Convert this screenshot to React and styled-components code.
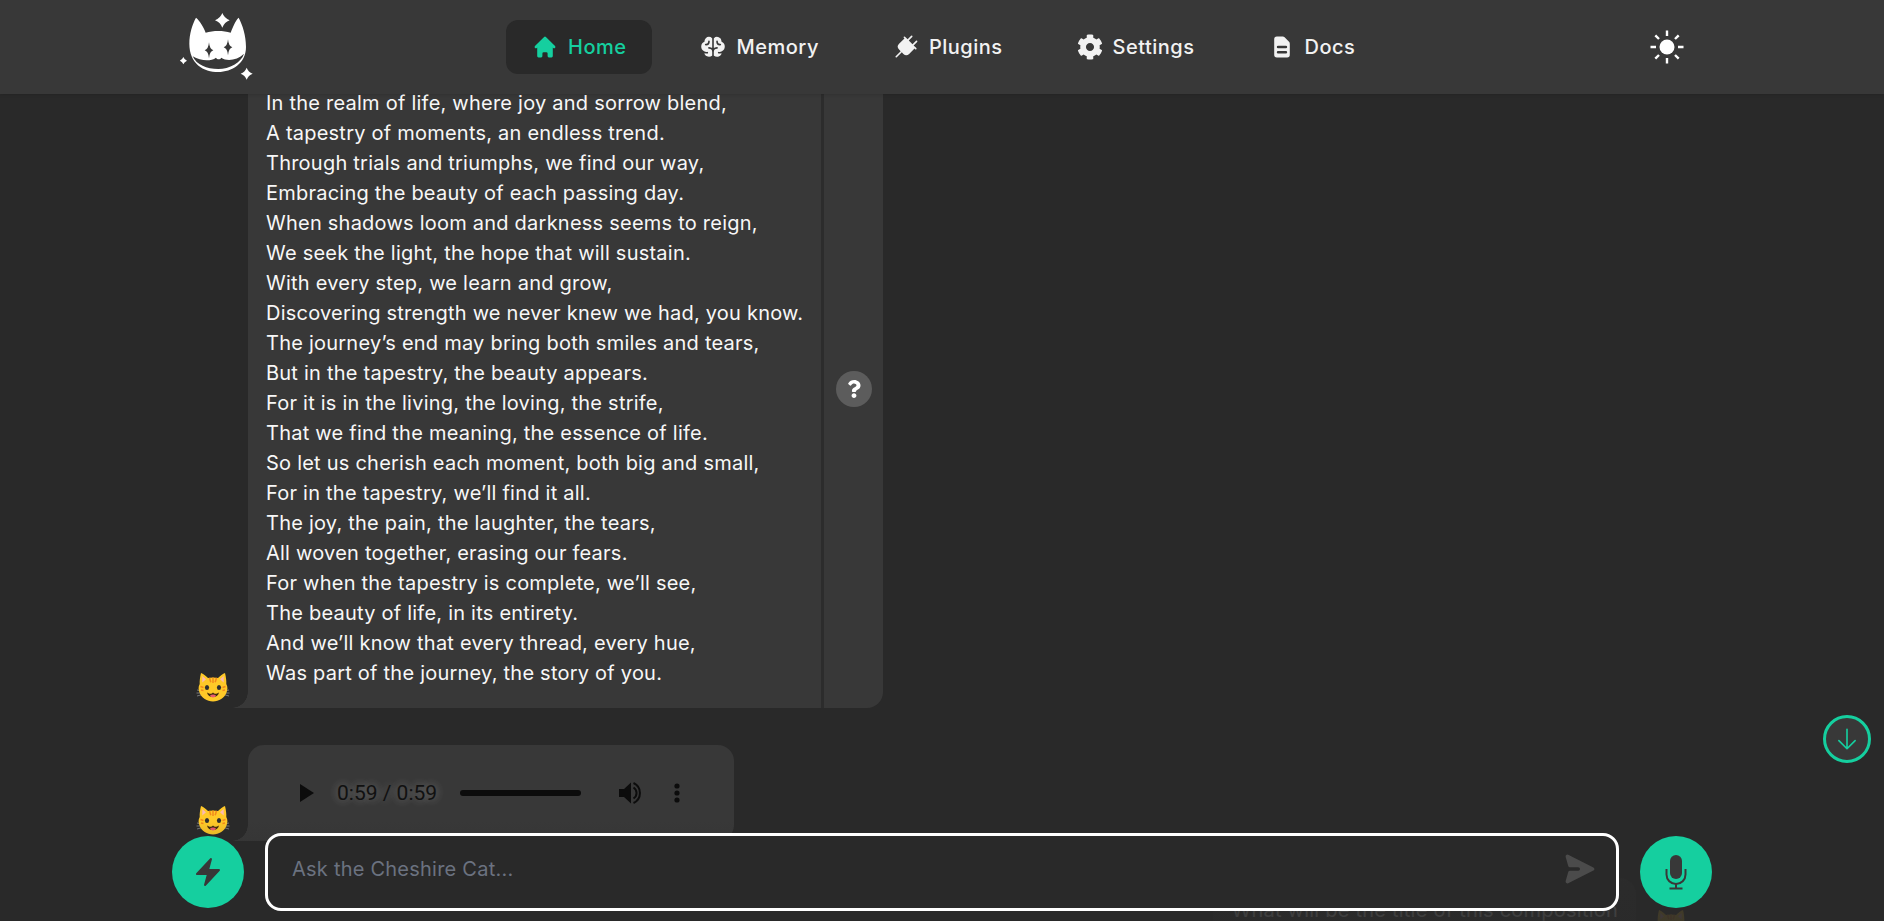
import React from "react";
import styled, { createGlobalStyle } from "styled-components";
import { HiHome, HiDocumentText, HiPaperAirplane } from "react-icons/hi";
import { HiBolt, HiOutlineArrowDown } from "react-icons/hi2";
import { PiBrainFill, PiPlugFill } from "react-icons/pi";
import { FaQuestion, FaCog } from "react-icons/fa";

const GREEN = "#15cf9f";
const BASE = "#292929";
const PANEL = "#383838";
const FONT = `Inter, "Noto Sans", "Liberation Sans", sans-serif`;

const Global = createGlobalStyle`
  html, body { margin: 0; padding: 0; height: 100%; background: ${BASE}; }
  body { font-family: ${FONT}; color: #fff; overflow: hidden; }
  * { box-sizing: border-box; }
`;

const Page = styled.div`
  position: relative;
  display: flex;
  flex-direction: column;
  height: 921px;
  overflow: hidden;
  background: ${BASE};
`;

const NavBar = styled.header`
  position: relative;
  z-index: 2;
  flex: 0 0 94px;
  display: flex;
  align-items: center;
  padding: 0 190px 0 180px;
  background: ${PANEL};
  box-shadow: 0 1px 3px rgba(0, 0, 0, 0.12);
`;

const Logo = styled.svg`
  width: 80px;
  height: 80px;
  display: block;
  flex: none;
`;

const Menu = styled.nav`
  display: flex;
  align-items: center;
  gap: 22px;
  margin-left: 246px;
`;

const MenuItem = styled.a`
  display: flex;
  align-items: center;
  gap: 10px;
  height: 54px;
  padding: 0 26px 1px;
  border-radius: 12px;
  font-size: 20px;
  font-weight: 500;
  letter-spacing: 0.5px;
  color: ${(p) => (p.$active ? GREEN : "#f2f2f2")};
  background: ${(p) => (p.$active ? BASE : "transparent")};
  svg {
    width: 26px;
    height: 26px;
    flex: none;
  }
`;

const ThemeButton = styled.button`
  display: flex;
  align-items: center;
  justify-content: center;
  width: 54px;
  height: 54px;
  margin-left: auto;
  padding: 0;
  border: 0;
  background: transparent;
  color: #fff;
  svg {
    width: 36px;
    height: 36px;
  }
`;

const Chat = styled.main`
  flex: 1;
  min-height: 0;
  margin-top: -26px;
  display: flex;
  flex-direction: column;
  gap: 37px;
  overflow: hidden;
`;

const Row = styled.div`
  display: flex;
  flex-direction: ${(p) => (p.$user ? "row-reverse" : "row")};
  align-items: flex-end;
  gap: 14px;
  padding: 0 192px;
  flex: none;
`;

const Avatar = styled.svg`
  display: block;
  width: 42px;
  height: 30px;
  margin-bottom: 6px;
  flex: none;
`;

const Bubble = styled.div`
  position: relative;
  display: flex;
  background: ${PANEL};
  border-radius: ${(p) => (p.$user ? "16px 16px 0 16px" : "16px 16px 16px 0")};
  &::before {
    content: "";
    position: absolute;
    bottom: 0;
    width: 16px;
    height: 16px;
    ${(p) =>
      p.$user
        ? `right: -16px; background: radial-gradient(circle at 100% 0, transparent 15.5px, ${PANEL} 16px);`
        : `left: -16px; background: radial-gradient(circle at 0 0, transparent 15.5px, ${PANEL} 16px);`}
  }
`;

const MessageText = styled.div`
  padding: ${(p) => (p.$user ? "17px" : "20px")} 18px 20px;
  font-size: 20px;
  line-height: 30px;
  white-space: pre-line;
  letter-spacing: 0.23px;
  color: #f7f7f7;
`;

const SideColumn = styled.div`
  width: 62px;
  display: flex;
  align-items: center;
  justify-content: center;
  border-left: 3px solid #2c2c2c;
`;

const WhyButton = styled.button`
  display: flex;
  align-items: center;
  justify-content: center;
  width: 36px;
  height: 36px;
  margin-top: 2px;
  padding: 0;
  border: 0;
  border-radius: 50%;
  background: #5c5c5c;
  color: #fff;
  svg {
    width: 18px;
    height: 18px;
  }
`;

const AudioPlayer = styled.div`
  display: flex;
  align-items: center;
  width: 486px;
  height: 96px;
  padding: 0 0 0 52px;
  color: #0c0c0c;
`;

const PlayIcon = styled.svg`
  width: 14px;
  height: 18px;
  flex: none;
  margin-right: 23px;
`;

const TimeLabel = styled.span`
  font-family: Roboto, "Liberation Sans", sans-serif;
  font-size: 21px;
  width: 123px;
  flex: none;
  color: #111;
  text-shadow: 0 0 10px rgba(255, 255, 255, 0.3), 0 0 14px rgba(255, 255, 255, 0.15);
`;

const Track = styled.div`
  width: 121px;
  height: 6px;
  flex: none;
  margin-right: 37px;
  border-radius: 3px;
  background: #0c0c0c;
`;

const VolumeIcon = styled.svg`
  width: 24px;
  height: 24px;
  flex: none;
  margin-right: 32px;
`;

const DotsIcon = styled.svg`
  width: 6px;
  height: 20px;
  flex: none;
`;

const ScrollDown = styled.button`
  position: absolute;
  z-index: 3;
  top: 715px;
  right: 13px;
  display: flex;
  align-items: center;
  justify-content: center;
  width: 48px;
  height: 48px;
  padding: 0;
  border: 3px solid ${GREEN};
  border-radius: 50%;
  background: ${PANEL};
  color: ${GREEN};
  svg {
    width: 26px;
    height: 26px;
  }
`;

const Composer = styled.footer`
  position: absolute;
  z-index: 2;
  left: 0;
  right: 0;
  bottom: 0;
  display: flex;
  align-items: center;
  gap: 21px;
  padding: 12px 172px 10px;
  background: linear-gradient(
    to bottom,
    rgba(41, 41, 41, 0) 0%,
    rgba(41, 41, 41, 0.15) 20%,
    rgba(41, 41, 41, 0.85) 55%,
    rgba(41, 41, 41, 0.9) 100%
  );
`;

const RoundButton = styled.button`
  display: flex;
  align-items: center;
  justify-content: center;
  flex: none;
  width: 72px;
  height: 72px;
  padding: 0;
  border: 0;
  border-radius: 50%;
  background: ${GREEN};
  color: ${PANEL};
  svg {
    width: ${(p) => p.$icon}px;
    height: ${(p) => p.$icon}px;
  }
`;

const InputBox = styled.div`
  flex: 1;
  height: 78px;
  display: flex;
  align-items: center;
  justify-content: space-between;
  padding: 0 18px 6px 24px;
  border: 3px solid #fff;
  border-radius: 16px;
  background: ${BASE};
`;

const Placeholder = styled.span`
  font-size: 20px;
  letter-spacing: 0.23px;
  color: #6b7280;
`;

const SendIcon = styled(HiPaperAirplane)`
  width: 36px;
  height: 36px;
  color: #4b4b4b;
  transform: rotate(90deg);
`;

const CatEmoji = () => (
  <Avatar viewBox="0 0 42 30" aria-hidden="true">
    <path d="M5 18l5.500 1.200M4.500 21h6M5 24l5.500-1.500M37 18l-5.500 1.200M37.500 21h-6M37 24l-5.500-1.500" stroke="#9a9a9a" strokeWidth="0.7" />
    <path d="M9 1C11 1.500 14 4 16 6C19 5.300 23 5.300 26 6C28 4 31 1.500 33 1C34 5 34.500 9 34.300 12C36 15 35.500 18 34.500 20.500C32.500 26 27 29.500 21 29.500C15 29.500 9.500 26 7.500 20.500C6.500 18 6 15 7.700 12C7.500 9 8 5 9 1Z" fill="#ffc928" />
    <path d="M10.300 4 L14 7.200 L10.300 10.500Z M31.700 4 L28 7.200 L31.700 10.500Z" fill="#fbb9b2" />
    <path d="M17.500 5.800l1.300 4.500M21 5.500v5.500M24.500 5.800l-1.300 4.500M8.500 14.500l3 1M33.500 14.500l-3 1M9 18l2.500 .4M33 18l-2.500 .4" stroke="#f2891c" strokeWidth="1.500" fill="none" />
    <ellipse cx="15" cy="15.500" rx="2.100" ry="2.500" fill="#2f2f2f" />
    <ellipse cx="27" cy="15.500" rx="2.100" ry="2.500" fill="#2f2f2f" />
    <path d="M15 20.500 C18 22.300 19.500 22.300 21 20.500 C22.500 22.300 24 22.300 27 20.500 C26 26.500 16 26.500 15 20.500Z" fill="#422b0d" />
    <path d="M18 23.500 C20 22 22 22 24 23.500 C23 26 19 26 18 23.500Z" fill="#ed5c70" />
  </Avatar>
);

const star = (cx, cy, rx, ry, k = 0.14) =>
  `M${cx} ${cy - ry}Q${cx + rx * k} ${cy - ry * k} ${cx + rx} ${cy}Q${cx + rx * k} ${cy + ry * k} ${cx} ${cy + ry}Q${cx - rx * k} ${cy + ry * k} ${cx - rx} ${cy}Q${cx - rx * k} ${cy - ry * k} ${cx} ${cy - ry}Z`;

const CatLogo = () => (
  <Logo viewBox="60 20 240 240" aria-label="Cheshire Cat">
    <path
      fill="#fff"
      d="M88 130C88 100 97 72 108 52C120 62 131 80 137 97C160 90 190 90 212 97C219 80 225 62 236 52C248 75 258 105 258 140C258 190 215 215 175 215C130 215 88 190 88 130Z"
    />
    <path
      fill={PANEL}
      d="M98 168C122 182 152 184 168 172C172 178 180 178 184 172C200 184 232 180 252 160C244 186 208 206 175 206C140 206 110 194 98 168Z"
    />
    <path fill={PANEL} d={star(147, 150, 13, 24, 0.14)} />
    <path fill={PANEL} d={star(204, 141, 13, 24, 0.14)} />
    <path fill="#fff" d={star(187, 60, 22, 22, 0.28)} />
    <path fill="#fff" d={star(70, 181, 11, 11, 0.28)} />
    <path fill="#fff" d={star(260, 220, 18, 18, 0.28)} />
  </Logo>
);

const SunIcon = () => (
  <svg viewBox="0 0 36 36" aria-hidden="true">
    <circle cx="18" cy="18" r="7.500" fill="currentColor" />
    <path
      d="M18 1.500v5.500M18 29v5.500M1.500 18h5.500M29 18h5.500M6.300 6.300l3.700 3.700M26 26l3.700 3.700M6.300 29.700l3.700-3.700M26 10l3.700-3.700"
      stroke="currentColor"
      strokeWidth="2.400"
      fill="none"
    />
  </svg>
);

const MicIcon = () => (
  <svg viewBox="0 0 36 36" aria-hidden="true">
    <rect x="12" y="1" width="12" height="24" rx="6" fill="currentColor" />
    <path d="M8.500 15v5.500a9.500 9.500 0 0 0 19 0V15" stroke="currentColor" strokeWidth="2" fill="none" />
    <path d="M18 30v4.500M11.500 34.500h13" stroke="currentColor" strokeWidth="2" fill="none" />
  </svg>
);

const POEM = `In the realm of life, where joy and sorrow blend,
A tapestry of moments, an endless trend.
Through trials and triumphs, we find our way,
Embracing the beauty of each passing day.
When shadows loom and darkness seems to reign,
We seek the light, the hope that will sustain.
With every step, we learn and grow,
Discovering strength we never knew we had, you know.
The journey’s end may bring both smiles and tears,
But in the tapestry, the beauty appears.
For it is in the living, the loving, the strife,
That we find the meaning, the essence of life.
So let us cherish each moment, both big and small,
For in the tapestry, we’ll find it all.
The joy, the pain, the laughter, the tears,
All woven together, erasing our fears.
For when the tapestry is complete, we’ll see,
The beauty of life, in its entirety.
And we’ll know that every thread, every hue,
Was part of the journey, the story of you.`;

const NAV = [
  { label: "Home", Icon: HiHome, active: true },
  { label: "Memory", Icon: PiBrainFill },
  { label: "Plugins", Icon: PiPlugFill },
  { label: "Settings", Icon: FaCog },
  { label: "Docs", Icon: HiDocumentText },
];

export default function App() {
  return (
    <Page>
      <Global />
      <NavBar>
        <CatLogo />
        <Menu>
          {NAV.map(({ label, Icon, active }) => (
            <MenuItem key={label} $active={active}>
              <Icon />
              {label}
            </MenuItem>
          ))}
        </Menu>
        <ThemeButton aria-label="Theme">
          <SunIcon />
        </ThemeButton>
      </NavBar>

      <Chat>
        <Row>
          <CatEmoji />
          <Bubble>
            <MessageText>{POEM}</MessageText>
            <SideColumn>
              <WhyButton aria-label="Why this response">
                <FaQuestion />
              </WhyButton>
            </SideColumn>
          </Bubble>
        </Row>
        <Row>
          <CatEmoji />
          <Bubble>
            <AudioPlayer>
              <PlayIcon viewBox="0 0 14 18">
                <path d="M0 0L14 9L0 18Z" fill="currentColor" />
              </PlayIcon>
              <TimeLabel>0:59 / 0:59</TimeLabel>
              <Track />
              <VolumeIcon viewBox="0 0 24 24">
                <path d="M1 8h5l7-6.500v21L6 16H1Z" fill="currentColor" />
                <path d="M15.500 6.500a6.500 6.500 0 0 1 0 11" stroke="currentColor" strokeWidth="2" fill="none" />
                <path d="M15.500 2a11 11 0 0 1 0 20" stroke="currentColor" strokeWidth="2" fill="none" />
              </VolumeIcon>
              <DotsIcon viewBox="0 0 6 20">
                <circle cx="3" cy="3" r="2.600" fill="currentColor" />
                <circle cx="3" cy="10" r="2.600" fill="currentColor" />
                <circle cx="3" cy="17" r="2.600" fill="currentColor" />
              </DotsIcon>
            </AudioPlayer>
          </Bubble>
        </Row>
        <Row $user>
          <CatEmoji />
          <Bubble $user>
            <MessageText $user>What will be the title of this composition</MessageText>
          </Bubble>
        </Row>
      </Chat>

      <ScrollDown aria-label="Scroll to bottom">
        <HiOutlineArrowDown />
      </ScrollDown>

      <Composer>
        <RoundButton aria-label="Prompt examples" $icon={32}>
          <HiBolt />
        </RoundButton>
        <InputBox>
          <Placeholder>Ask the Cheshire Cat...</Placeholder>
          <SendIcon />
        </InputBox>
        <RoundButton aria-label="Record" $icon={36}>
          <MicIcon />
        </RoundButton>
      </Composer>
    </Page>
  );
}
